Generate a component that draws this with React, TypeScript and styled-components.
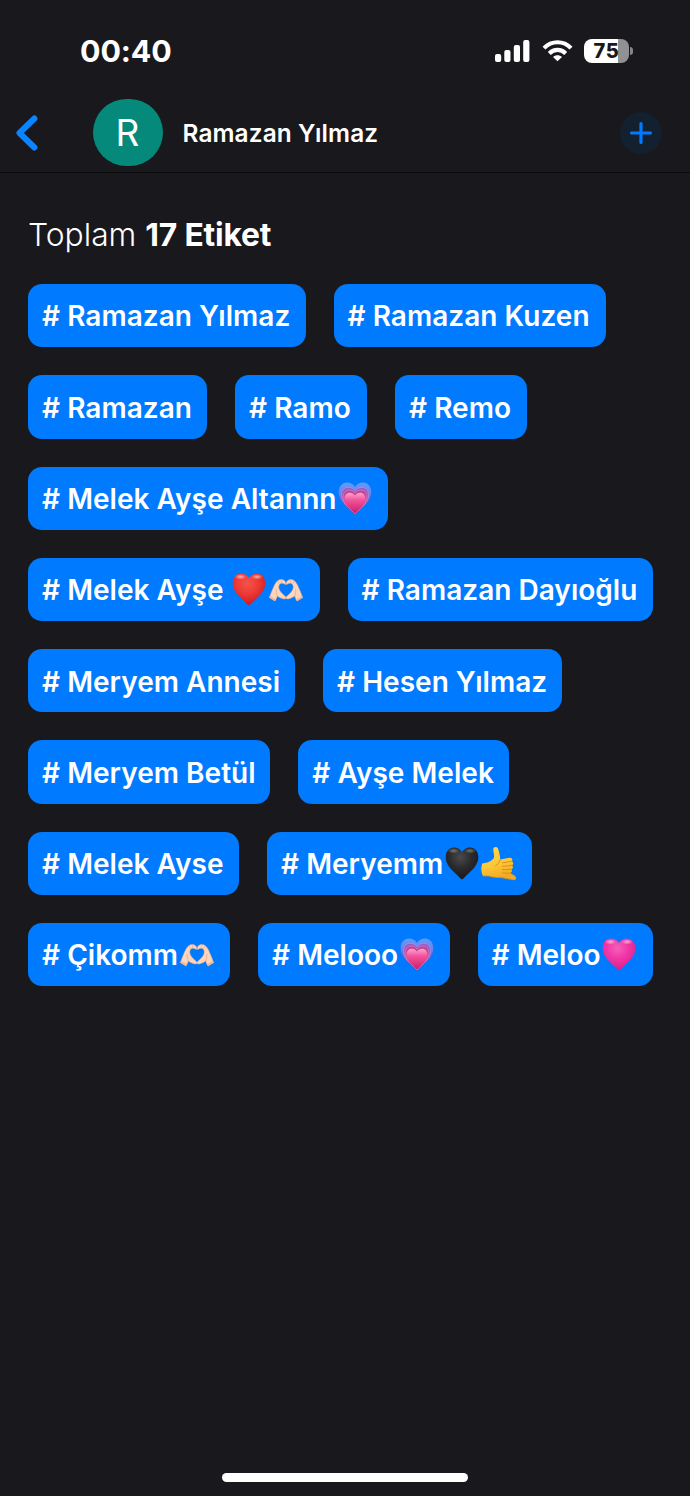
import React, { useId } from 'react';
import styled, { createGlobalStyle } from 'styled-components';

const GlobalStyle = createGlobalStyle`
  * { box-sizing: border-box; }
  html, body { margin: 0; background: #19181d; }
  body { font-family: Inter, "Liberation Sans", sans-serif; color: #fff; }
`;

const Screen = styled.div`
  width: 690px;
  height: 1496px;
  display: flex;
  flex-direction: column;
  background: #19181d;
  overflow: hidden;
`;

const StatusBar = styled.header`
  height: 94px;
  padding: 30px 57px 22px 80px;
  display: flex;
  align-items: center;
  justify-content: space-between;
`;

const Clock = styled.time`
  font-size: 30.4px;
  line-height: 42px;
  font-weight: 700;
  letter-spacing: -0.1px;
`;

const StatusIcons = styled.div`
  display: flex;
  align-items: center;
`;

const SignalIcon = styled.svg`
  margin-right: 12px;
`;

const WifiIcon = styled.svg`
  margin-right: 11px;
`;

const Battery = styled.div`
  width: 45px;
  height: 24px;
  border-radius: 8px;
  background: linear-gradient(90deg, #fff 34px, #919194 34px);
  color: #19181d;
  font-size: 20px;
  line-height: 25px;
  font-weight: 800;
  letter-spacing: 0.6px;
  text-align: center;
`;

const BatteryTip = styled.span`
  width: 3px;
  height: 8px;
  margin-left: 1px;
  border-radius: 0 4px 4px 0;
  background: #858588;
`;

const NavBar = styled.nav`
  height: 79px;
  padding: 0 28px 0 15px;
  display: flex;
  align-items: center;
  border-bottom: 1px solid #0a0a0c;
`;

const IconButton = styled.button`
  padding: 0;
  border: 0;
  background: none;
  display: flex;
  align-items: center;
  justify-content: center;
`;

const BackButton = styled(IconButton)`
  width: 24px;
  height: 40px;
`;

const AddButton = styled(IconButton)`
  width: 42px;
  height: 42px;
  margin-left: auto;
  border-radius: 50%;
  background: #12202f;
`;

const Avatar = styled.div`
  width: 70px;
  height: 67px;
  margin: 0 0 1px 54px;
  border-radius: 35px;
  background: #04897b;
  font-size: 37px;
  line-height: 68px;
  text-align: center;
  text-indent: -1px;
`;

const ContactName = styled.h1`
  margin: 0 0 0 19.5px;
  font-size: 24.4px;
  line-height: 32px;
  font-weight: 600;
  letter-spacing: 0.12px;
`;

const Content = styled.main`
  flex: 1;
  padding: 41px 28px 0;
`;

const Summary = styled.h2`
  margin: 0;
  font-size: 31.8px;
  line-height: 42px;
  font-weight: 300;
  letter-spacing: 0;
`;

const Total = styled.strong`
  font-weight: 700;
  letter-spacing: -0.2px;
`;

const TagList = styled.div`
  margin-top: 28px;
  display: flex;
  flex-direction: column;
  gap: 28px;
`;

const TagRow = styled.div`
  display: flex;
  gap: 28px;
`;

const Tag = styled.span<{ $width: number }>`
  width: ${(p) => p.$width}px;
  height: 63.3px;
  padding: 1.4px 0 0 14px;
  display: flex;
  align-items: center;
  border-radius: 14px;
  background: #007aff;
  font-size: 28px;
  line-height: 36px;
  font-weight: 600;
  letter-spacing: 0.03px;
  white-space: pre;
`;

const EmojiGlyph = styled.svg`
  flex: none;
  width: 36px;
  height: 36px;
  margin-left: 0.7px;
`;

const HomeArea = styled.footer`
  height: 23px;
  display: flex;
  justify-content: center;
`;

const HomeIndicator = styled.div`
  width: 246px;
  height: 9px;
  border-radius: 5px;
  background: #fff;
`;

type EmojiName = 'red' | 'black' | 'pink' | 'growing' | 'hands' | 'shaka';

const HEART =
  'M18 33.6 C17 33.2 14.5 30.2 11 27 C6 22.4 1.7 17.6 1.7 11 C1.7 5.6 5.2 1.6 10 1.6 C13.4 1.6 16.4 3.2 18 6 C19.6 3.2 22.6 1.6 26 1.6 C30.8 1.6 34.3 5.6 34.3 11 C34.3 17.6 30 22.4 25 27 C21.5 30.2 19 33.2 18 33.6 Z';

const HEART_COLORS: Record<string, [string, string, string]> = {
  red: ['#f2554a', '#ee3a35', '#c4141f'],
  black: ['#4a4a4e', '#2b2b2e', '#161618'],
  pink: ['#f560b8', '#f036a6', '#d91a8a'],
};

function Heart({ kind }: { kind: string }) {
  const id = useId();
  const [light, mid, dark] = HEART_COLORS[kind];
  const shine = kind === 'black' ? 0.35 : 0.6;
  return (
    <EmojiGlyph viewBox="0 0 36 36">
      <defs>
        <radialGradient id={id} cx="0.45" cy="0.3" r="0.75">
          <stop offset="0" stopColor={light} />
          <stop offset="0.45" stopColor={mid} />
          <stop offset="1" stopColor={dark} />
        </radialGradient>
        <radialGradient id={id + 's'}>
          <stop offset="0" stopColor="#fff" stopOpacity={shine} />
          <stop offset="1" stopColor="#fff" stopOpacity="0" />
        </radialGradient>
      </defs>
      <path d={HEART} fill={`url(#${id})`} />
      <ellipse cx="9.4" cy="4.8" rx="5.8" ry="2.8" fill={`url(#${id}s)`} />
      <ellipse cx="26.2" cy="4.8" rx="5.8" ry="2.8" fill={`url(#${id}s)`} />
    </EmojiGlyph>
  );
}

function GrowingHeart() {
  const id = useId();
  return (
    <EmojiGlyph viewBox="0 0 36 36">
      <defs>
        <linearGradient id={id} x1="0" y1="0" x2="0" y2="1">
          <stop offset="0" stopColor="#5f9dfb" />
          <stop offset="0.35" stopColor="#737fe6" />
          <stop offset="0.7" stopColor="#8f45b0" />
          <stop offset="1" stopColor="#b0186e" />
        </linearGradient>
        <linearGradient id={id + 'i'} x1="0" y1="0" x2="0" y2="1">
          <stop offset="0" stopColor="#ffa3cf" />
          <stop offset="0.35" stopColor="#f3559c" />
          <stop offset="1" stopColor="#cc1c6b" />
        </linearGradient>
      </defs>
      <path d={HEART} fill={`url(#${id})`} />
      <path d={HEART} fill="#9a5cc4" stroke="#a79af2" strokeWidth="0.8" transform="translate(3.1 5) scale(0.83)" />
      <path d={HEART} fill="#c2458f" stroke="#df8ccd" strokeWidth="0.8" transform="translate(4.9 7.8) scale(0.73)" />
      <path d={HEART} fill={`url(#${id}i)`} transform="translate(6.3 10.6) scale(0.65)" />
    </EmojiGlyph>
  );
}

function HeartHands() {
  const hand = (
    <>
      <path
        d="M1.2 25.6 C2.6 23 3 20.6 4.2 18.2 C5.6 15 7 11 9.6 8.8 C11.8 7 15.4 7 17 9.2 C17.9 10.4 18.1 11.8 17.6 12.6 C16.2 12.4 15.4 11 13.6 11.3 C11.4 11.6 10.6 13.6 10.8 15.8 C11.1 18.8 14 21.8 17.9 24.9 C18.4 26.4 17.4 27.3 15.8 27 C13.2 26.4 11 25.2 9.2 24 C8.8 26.2 8 27.6 6.9 29.1 Z"
        fill="#fcd6bc"
        stroke="#e0a17e"
        strokeWidth="0.5"
      />
      <path d="M8.2 17 C8.1 19.6 8.5 22 9.2 24 M10.2 9.4 L11.2 11.6 M13.2 8.4 L13.8 10.4" fill="none" stroke="#e3a583" strokeWidth="0.7" />
      <path d="M1.2 25.6 L6.9 29.1 L8 27.5 L2.2 23.9 Z" fill="#f0b796" />
    </>
  );
  return (
    <EmojiGlyph viewBox="0 0 36 36">
      {hand}
      <g transform="translate(36 0) scale(-1 1)">{hand}</g>
    </EmojiGlyph>
  );
}

function ShakaHand() {
  const id = useId();
  return (
    <EmojiGlyph viewBox="0 0 36 36">
      <defs>
        <linearGradient id={id} x1="0" y1="0" x2="0.3" y2="1">
          <stop offset="0" stopColor="#ffd84a" />
          <stop offset="0.6" stopColor="#fdc735" />
          <stop offset="1" stopColor="#f2aa22" />
        </linearGradient>
      </defs>
      <path
        d="M1.2 17.5 C4.8 17.4 9.6 15.8 12.4 12.8 C14 10.4 12.4 6.4 12.3 3.4 C12.4 .6 16 .2 17.2 3.1 C18.4 6.6 19 10.2 19.3 13.4 L28.3 11.8 C31.2 11.5 32 13.8 30.8 15.2 C32.6 16.2 32.6 18.5 31 19.3 C32.6 20.6 32 22.8 30.3 23.2 C31.6 24.6 30.9 26.5 29.4 27 L34 30 C36 31.5 34.9 34.3 32.6 33.9 C28.4 33 24.2 32.2 20 31.6 C15 31.5 11 31.2 7.4 29.9 L2 30 C.2 27 -.2 21 1.2 17.5 Z"
        fill={`url(#${id})`}
      />
      <path
        d="M21.5 16.8 C24.5 16.3 27.7 15.9 30.8 15.2 M21.5 20.2 C24.8 20.2 27.7 20 31 19.3 M21.5 23.6 C24.3 23.8 27.3 23.7 30.3 23.2 M21.5 26.9 C24.3 27.3 27 27.4 29.4 27 M19.3 13.4 C19.4 15.8 17.2 17.9 14.6 19.6"
        fill="none"
        stroke="#d68a17"
        strokeWidth="0.9"
        strokeLinecap="round"
      />
      <path d="M2 30 L7.4 29.9 C11 31.2 15 31.5 20 31.6 L32.6 33.9" fill="none" stroke="#d98e1c" strokeWidth="0.8" />
    </EmojiGlyph>
  );
}

function Emoji({ name }: { name: EmojiName }) {
  if (name === 'growing') return <GrowingHeart />;
  if (name === 'hands') return <HeartHands />;
  if (name === 'shaka') return <ShakaHand />;
  return <Heart kind={name} />;
}

interface TagData {
  label: string;
  width: number;
  emojis?: EmojiName[];
}

const ROWS: TagData[][] = [
  [{ label: 'Ramazan Yılmaz', width: 277.5 }, { label: 'Ramazan Kuzen', width: 272 }],
  [{ label: 'Ramazan', width: 179 }, { label: 'Ramo', width: 132 }, { label: 'Remo', width: 131.5 }],
  [{ label: 'Melek Ayşe Altannn', width: 360, emojis: ['growing'] }],
  [{ label: 'Melek Ayşe ', width: 291.5, emojis: ['red', 'hands'] }, { label: 'Ramazan Dayıoğlu', width: 305.5 }],
  [{ label: 'Meryem Annesi', width: 267 }, { label: 'Hesen Yılmaz', width: 239 }],
  [{ label: 'Meryem Betül', width: 242.3 }, { label: 'Ayşe Melek', width: 210.7 }],
  [{ label: 'Melek Ayse', width: 211 }, { label: 'Meryemm', width: 265, emojis: ['black', 'shaka'] }],
  [
    { label: 'Çikomm', width: 202, emojis: ['hands'] },
    { label: 'Melooo', width: 191.5, emojis: ['growing'] },
    { label: 'Meloo', width: 175.5, emojis: ['pink'] },
  ],
];

export default function App() {
  return (
    <Screen>
      <GlobalStyle />
      <StatusBar>
        <Clock>00:40</Clock>
        <StatusIcons>
          <SignalIcon width="35" height="24" viewBox="0 0 35 24" fill="#fff">
            <rect x="0" y="15" width="6.2" height="8" rx="2" />
            <rect x="9.3" y="11" width="6.2" height="12" rx="2" />
            <rect x="18.8" y="6" width="6.2" height="17" rx="2" />
            <rect x="28.2" y="1" width="6.2" height="22" rx="2" />
          </SignalIcon>
          <WifiIcon width="31" height="24" viewBox="0 0 31 24" fill="none" stroke="#fff" strokeWidth="4.2">
            <path d="M2 9.1 C9.5 1.3 21.5 1.3 29 9.1" />
            <path d="M7.3 14.4 C12 9.8 19 9.8 23.7 14.4" />
            <path d="M15.5 22.3 L11 17.9 C13.5 15.6 17.5 15.6 20 17.9 Z" fill="#fff" stroke="none" />
          </WifiIcon>
          <Battery>75</Battery>
          <BatteryTip />
        </StatusIcons>
      </StatusBar>
      <NavBar>
        <BackButton aria-label="Geri">
          <svg width="24" height="40" viewBox="0 0 24 40" fill="none" stroke="#0a84ff" strokeWidth="6" strokeLinecap="round" strokeLinejoin="round">
            <path d="M19.4 5.5 L4.5 20 L19.4 34.5" />
          </svg>
        </BackButton>
        <Avatar>R</Avatar>
        <ContactName>Ramazan Yılmaz</ContactName>
        <AddButton aria-label="Ekle">
          <svg width="24" height="24" viewBox="0 0 24 24" stroke="#007aff" strokeWidth="3.2" strokeLinecap="round">
            <path d="M12 2.5 V21.5 M2.5 12 H21.5" />
          </svg>
        </AddButton>
      </NavBar>
      <Content>
        <Summary>
          Toplam <Total>17 Etiket</Total>
        </Summary>
        <TagList>
          {ROWS.map((row, i) => (
            <TagRow key={i}>
              {row.map((tag) => (
                <Tag key={tag.label} $width={tag.width}>
                  {'# ' + tag.label}
                  {tag.emojis?.map((name) => <Emoji key={name} name={name} />)}
                </Tag>
              ))}
            </TagRow>
          ))}
        </TagList>
      </Content>
      <HomeArea>
        <HomeIndicator />
      </HomeArea>
    </Screen>
  );
}
